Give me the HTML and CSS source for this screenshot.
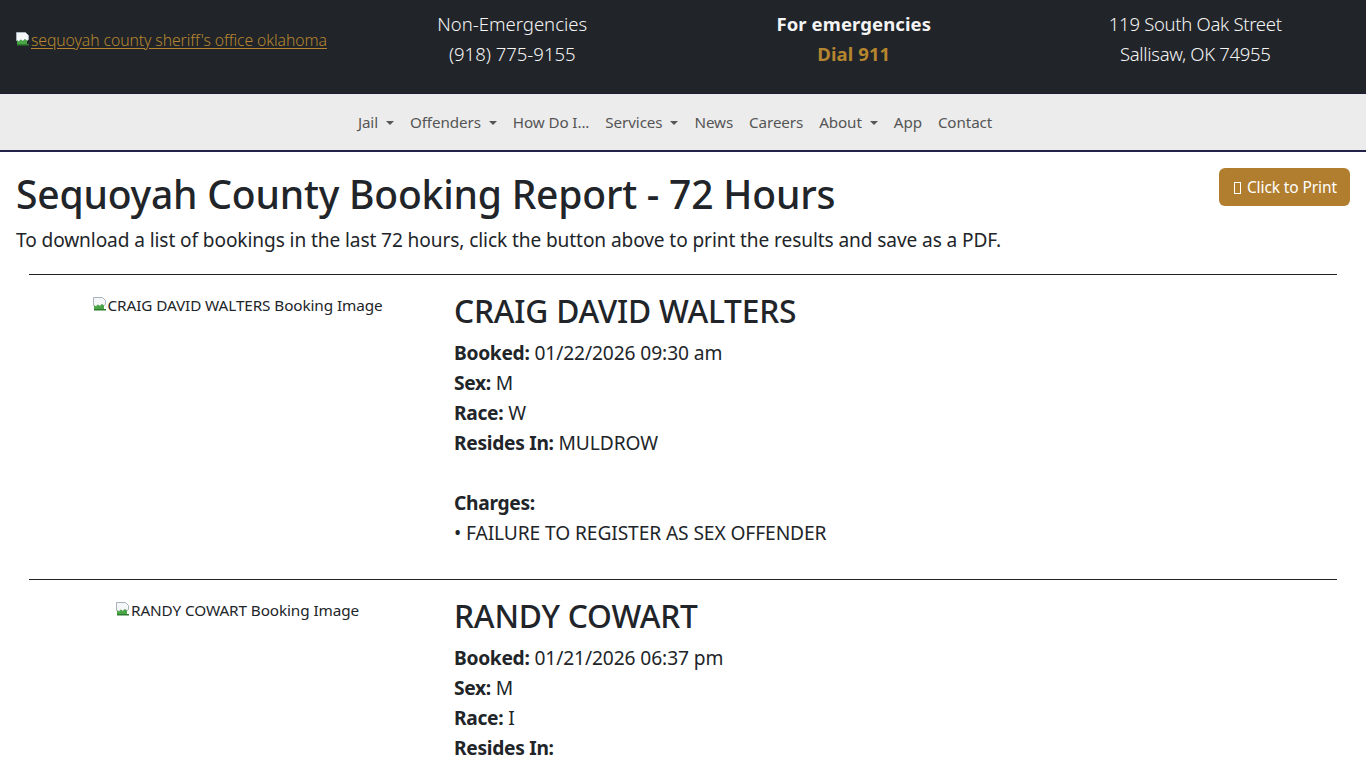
FILE: index.html
```html
<!DOCTYPE html>
<html lang="en">
<head>
<meta charset="utf-8">
<title>Sequoyah County Booking Report - 72 Hours</title>
<link rel="stylesheet" href="styles.css">
</head>
<body>
<header class="topbar">
  <div class="top-col logo-col">
    <a href="#" class="logo-link"><svg class="broken" viewBox="0 0 16 16" width="16" height="16"><path d="M1.5 1.5h9l3 3v4l-2 1.5-2-1.5-2 2-2-1.5-2 2-2-1.5z" fill="#f4f6f8" stroke="#a9b3bd"/><path d="M2 9l2 1.5 2-2 2 1.5 2-2 2 1.5v4H2z" fill="#4aa547"/><path d="M2 13h12v1.5H2z" fill="#2e7a2f"/></svg>sequoyah county sheriff's office oklahoma</a>
  </div>
  <div class="top-col">
    <div class="light">Non-Emergencies</div>
    <div class="light">(918) 775-9155</div>
  </div>
  <div class="top-col">
    <div class="bold">For emergencies</div>
    <div class="bold gold">Dial 911</div>
  </div>
  <div class="top-col">
    <div class="light addr">119 South Oak Street</div>
    <div class="light addr">Sallisaw, OK 74955</div>
  </div>
</header>
<nav class="mainnav">
  <a href="#" class="nav-item dd">Jail</a>
  <a href="#" class="nav-item dd">Offenders</a>
  <a href="#" class="nav-item">How Do I...</a>
  <a href="#" class="nav-item dd">Services</a>
  <a href="#" class="nav-item">News</a>
  <a href="#" class="nav-item">Careers</a>
  <a href="#" class="nav-item dd">About</a>
  <a href="#" class="nav-item">App</a>
  <a href="#" class="nav-item">Contact</a>
</nav>
<main class="content">
  <div class="title-row">
    <div>
      <h1 class="page-title">Sequoyah County Booking Report - 72 Hours</h1>
      <p class="intro">To download a list of bookings in the last 72 hours, click the button above to print the results and save as a PDF.</p>
    </div>
    <button class="print-btn"><span class="tofu"></span> Click to Print</button>
  </div>

  <section class="booking">
    <div class="photo-col"><span class="alt-img"><svg class="broken" viewBox="0 0 16 16" width="16" height="16"><path d="M1.5 1.5h9l3 3v4l-2 1.5-2-1.5-2 2-2-1.5-2 2-2-1.5z" fill="#f4f6f8" stroke="#a9b3bd"/><path d="M2 9l2 1.5 2-2 2 1.5 2-2 2 1.5v4H2z" fill="#4aa547"/><path d="M2 13h12v1.5H2z" fill="#2e7a2f"/></svg>CRAIG DAVID WALTERS Booking Image</span></div>
    <div class="info-col">
      <h2 class="name">CRAIG DAVID WALTERS</h2>
      <div class="line"><b>Booked:</b> 01/22/2026 09:30 am</div>
      <div class="line"><b>Sex:</b> M</div>
      <div class="line"><b>Race:</b> W</div>
      <div class="line"><b>Resides In:</b> MULDROW</div>
      <div class="line blank"></div>
      <div class="line"><b>Charges:</b></div>
      <div class="line">• FAILURE TO REGISTER AS SEX OFFENDER</div>
    </div>
  </section>

  <section class="booking">
    <div class="photo-col"><span class="alt-img"><svg class="broken" viewBox="0 0 16 16" width="16" height="16"><path d="M1.5 1.5h9l3 3v4l-2 1.5-2-1.5-2 2-2-1.5-2 2-2-1.5z" fill="#f4f6f8" stroke="#a9b3bd"/><path d="M2 9l2 1.5 2-2 2 1.5 2-2 2 1.5v4H2z" fill="#4aa547"/><path d="M2 13h12v1.5H2z" fill="#2e7a2f"/></svg>RANDY COWART Booking Image</span></div>
    <div class="info-col">
      <h2 class="name">RANDY COWART</h2>
      <div class="line"><b>Booked:</b> 01/21/2026 06:37 pm</div>
      <div class="line"><b>Sex:</b> M</div>
      <div class="line"><b>Race:</b> I</div>
      <div class="line"><b>Resides In:</b></div>
      <div class="line blank"></div>
      <div class="line"><b>Charges:</b></div>
    </div>
  </section>
</main>
</body>
</html>
```
FILE: styles.css
```css
* { box-sizing: border-box; }
html, body { margin: 0; padding: 0; }
body {
  font-family: "Noto Sans", "Open Sans", "DejaVu Sans", sans-serif;
  color: #212529;
  background: #fff;
  overflow: hidden;
  height: 768px;
}
.topbar {
  display: grid;
  grid-template-columns: repeat(4, 1fr);
  align-items: center;
  height: 94px;
  padding: 9px 0 25px;
  background: #212429;
  border-bottom: 1px solid #1c1c38;
  color: #f4f4f4;
  font-size: 18.5px;
  line-height: 30px;
}
.top-col { text-align: center; }
.logo-col { text-align: left; padding-left: 15px; line-height: 20px; }
.logo-link {
  color: #b5862f;
  font-size: 15.8px;
  font-weight: 300;
  text-decoration: underline;
  text-underline-offset: 2px;
  letter-spacing: -0.1px;
}
.broken { vertical-align: -1px; }
.light { font-weight: 300; }
.addr { letter-spacing: -0.3px; }
.bold { font-weight: 700; letter-spacing: 0.1px; }
.gold { color: #b5862f; }
.mainnav {
  display: flex;
  justify-content: center;
  align-items: center;
  height: 58px;
  background: #ececec;
  border-bottom: 2px solid #23234a;
  padding-right: 16px;
}
.nav-item {
  color: #555;
  text-decoration: none;
  font-size: 15.2px;
  padding: 0 8px;
  letter-spacing: -0.1px;
}
.nav-item.dd::after {
  content: "";
  display: inline-block;
  margin-left: 8px;
  vertical-align: 3px;
  border-top: 4px solid #555;
  border-left: 4px solid transparent;
  border-right: 4px solid transparent;
}
.content { padding: 0 16px; }
.title-row {
  display: flex;
  justify-content: space-between;
  align-items: flex-start;
  padding-top: 11px;
  padding-bottom: 19px;
}
.page-title {
  margin: 0;
  font-size: 39px;
  font-weight: 500;
  line-height: 62px;
  letter-spacing: -0.2px;
}
.intro {
  margin: 0;
  font-size: 19.1px;
  line-height: 30px;
  letter-spacing: -0.1px;
}
.print-btn {
  margin-top: 5px;
  background: #b07e2e;
  color: #fff;
  border: none;
  border-radius: 6px;
  font-family: inherit;
  font-size: 15.5px;
  height: 38px;
  padding: 0 13px 0 15px;
  letter-spacing: -0.1px;
  flex-shrink: 0;
}
.tofu {
  display: inline-block;
  width: 7px;
  height: 12px;
  border: 1px solid #fff;
  vertical-align: -1px;
  margin-right: 2px;
}
.booking {
  display: grid;
  grid-template-columns: 416px 1fr;
  margin: 0 13px;
  border-top: 1px solid #222;
  padding-top: 15px;
  padding-bottom: 31px;
}
.photo-col { text-align: center; padding-top: 4px; }
.alt-img { font-size: 15.3px; letter-spacing: -0.1px; }
.info-col { padding-left: 9px; }
.name {
  margin: 0 0 6px;
  font-size: 31.7px;
  font-weight: 500;
  line-height: 42px;
  letter-spacing: -0.2px;
}
.line {
  font-size: 19.2px;
  line-height: 30px;
  letter-spacing: -0.1px;
}
.line b { font-weight: 700; letter-spacing: -0.3px; }
.blank { height: 30px; }
```
